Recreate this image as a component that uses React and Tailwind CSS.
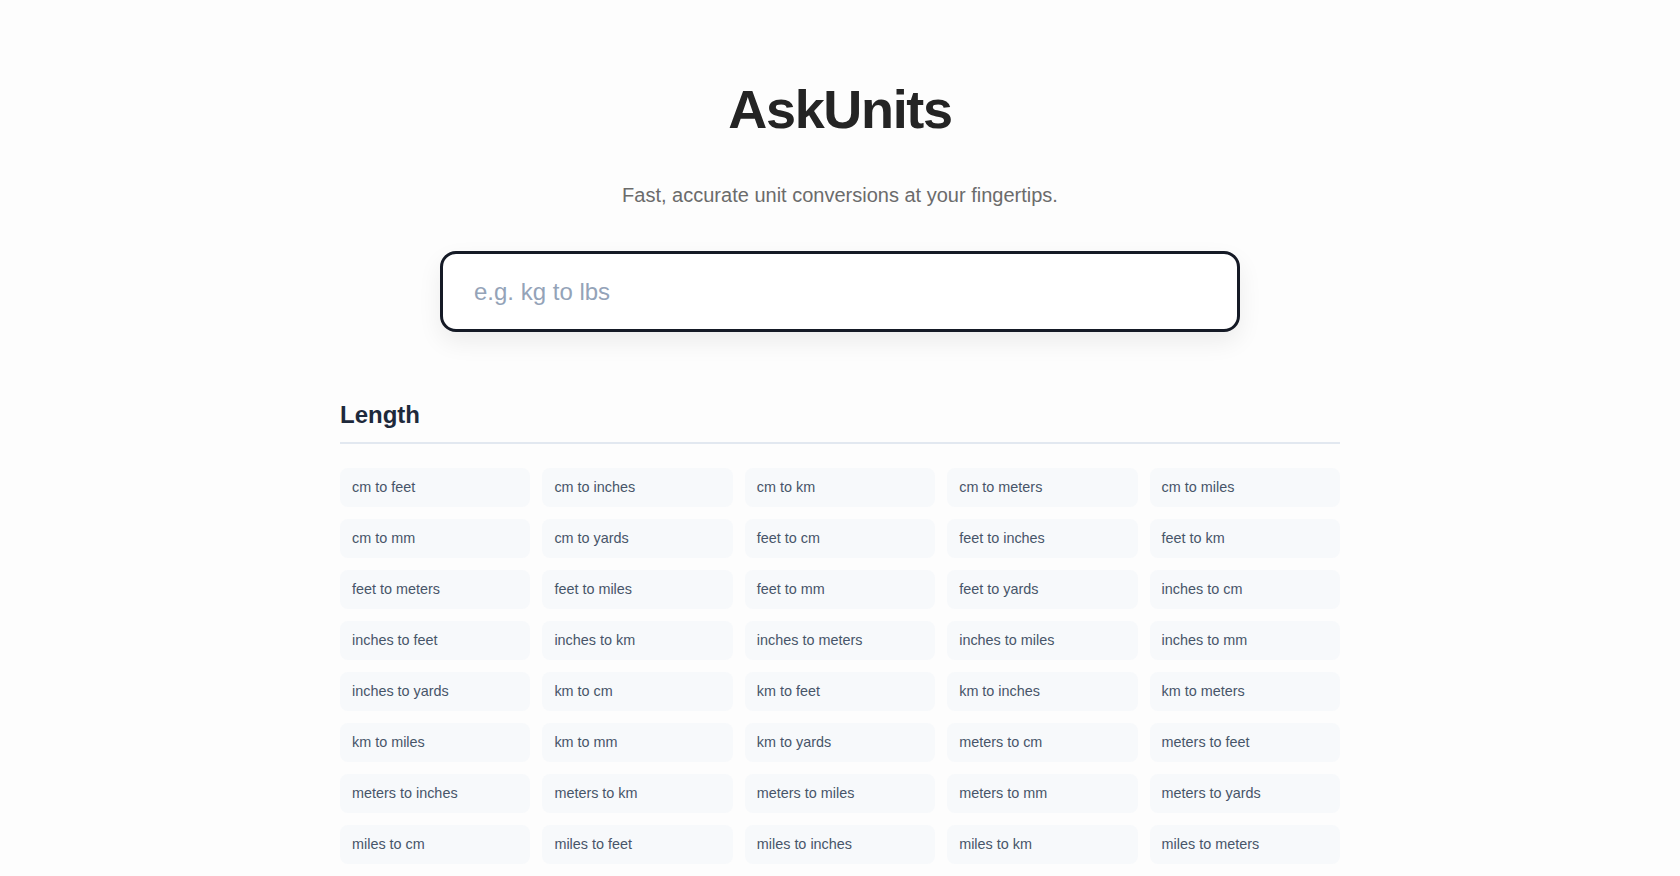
import React, { useEffect, useRef } from "react";

const lengthUnits = ["cm", "feet", "inches", "km", "meters", "miles", "mm", "yards"];

const lengthPairs = lengthUnits.flatMap((from) =>
  lengthUnits.filter((to) => to !== from).map((to) => `${from} to ${to}`)
);

function Category({ title, items }) {
  return (
    <section className="mt-[67px]">
      <h2 className="text-[24px] leading-[32px] font-bold text-[#1e293b] pb-[11px] border-b-2 border-[#e2e8f0]">
        {title}
      </h2>
      <div className="mt-[24px] grid grid-cols-5 gap-x-[12px] gap-y-[12px]">
        {items.map((label) => (
          <a
            key={label}
            href="#"
            className="h-[39px] flex items-center px-3 rounded-lg bg-[#f7f9fb] text-[14.4px] text-[#475569] hover:bg-[#eef2f6]"
          >
            {label}
          </a>
        ))}
      </div>
    </section>
  );
}

export default function App() {
  const inputRef = useRef(null);

  useEffect(() => {
    inputRef.current?.focus();
  }, []);

  return (
    <div
      className="min-h-screen bg-[#fdfdfd]"
      style={{ fontFamily: '"Liberation Sans", Arial, sans-serif' }}
    >
      <main className="w-[1000px] mx-auto pt-[77px] pb-16">
        <h1 className="text-center text-[54px] leading-[65px] font-bold tracking-[-0.025em] text-[#242424]">
          AskUnits
        </h1>
        <p className="mt-[39px] text-center text-[20px] leading-[28px] text-[#6b6b6b]">
          Fast, accurate unit conversions at your fingertips.
        </p>
        <div className="mt-[42px] flex justify-center">
          <input
            ref={inputRef}
            autoFocus
            type="text"
            placeholder="e.g. kg to lbs"
            className="box-border w-[800px] h-[81px] rounded-2xl border-[3px] border-[#151a26] bg-white pl-[31px] pr-8 text-[24px] text-[#1e293b] caret-[#1e293b] placeholder:text-[#94a3b8] outline-none shadow-[0_10px_25px_rgba(0,0,0,0.07)]"
          />
        </div>
        <Category title="Length" items={lengthPairs} />
      </main>
    </div>
  );
}
